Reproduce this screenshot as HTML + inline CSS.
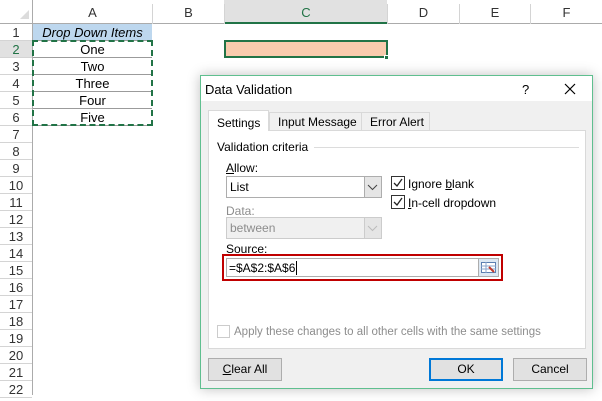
<!DOCTYPE html>
<html><head><style>
*{margin:0;padding:0;box-sizing:border-box}
body{width:602px;height:401px;overflow:hidden;background:#fff;font-family:"Liberation Sans",sans-serif;position:relative}
.a{position:absolute}
.hd{color:#333;font-size:13px;text-align:center}
.rn{left:0;width:32px;text-align:center;font-size:13px;color:#333;height:17px;line-height:17px;border-bottom:1px solid #d4d4d4}
.cl{left:33px;width:119px;text-align:center;font-size:13px;height:17px;line-height:17px;border-bottom:1px solid #9b9b9b;color:#000}
.t{font-size:12px;color:#000;white-space:nowrap}
.cb{width:14px;height:14px;border:1px solid #333;background:#fff}
.btn{height:23px;border:1px solid #adadad;background:#e1e1e1;font-size:12px;text-align:center;line-height:21px}
</style></head><body>
<div class="a" style="left:0;top:0;width:602px;height:24px;border-bottom:1px solid #ababab;background:#fff"></div>
<div class="a" style="left:224px;top:0;width:163px;height:24px;background:#e1e1e1;border-bottom:2px solid #217346"></div>
<div class="a" style="left:32px;top:0;width:1px;height:395px;background:#ababab"></div>
<div class="a" style="left:152px;top:4px;width:1px;height:20px;background:#d4d4d4"></div>
<div class="a" style="left:224px;top:4px;width:1px;height:20px;background:#d4d4d4"></div>
<div class="a" style="left:387px;top:4px;width:1px;height:20px;background:#d4d4d4"></div>
<div class="a" style="left:459px;top:4px;width:1px;height:20px;background:#d4d4d4"></div>
<div class="a" style="left:530px;top:4px;width:1px;height:20px;background:#d4d4d4"></div>
<div class="a" style="left:20px;top:10px;width:0;height:0;border-left:9px solid transparent;border-bottom:9px solid #dcdcdc"></div>
<div class="a hd" style="left:33px;top:5px;width:119px">A</div>
<div class="a hd" style="left:153px;top:5px;width:71px">B</div>
<div class="a hd" style="left:225px;top:5px;width:162px;color:#217346">C</div>
<div class="a hd" style="left:388px;top:5px;width:71px">D</div>
<div class="a hd" style="left:460px;top:5px;width:70px">E</div>
<div class="a hd" style="left:531px;top:5px;width:71px">F</div>
<div id="rows"></div>
<script>
var h='';for(var i=1;i<=22;i++){var y=24+(i-1)*17;h+='<div class="a rn" style="top:'+y+'px;'+(i==2?'background:#e1e1e1;color:#217346':'')+'">'+i+'</div>';}
document.getElementById('rows').outerHTML=h;
</script>
<div class="a cl" style="top:24px;background:#bdd7ee;font-style:italic">Drop Down Items</div>
<div class="a cl" style="top:41px">One</div>
<div class="a cl" style="top:58px">Two</div>
<div class="a cl" style="top:75px">Three</div>
<div class="a cl" style="top:92px">Four</div>
<div class="a cl" style="top:109px">Five</div>
<div class="a" style="left:32px;top:40px;width:121px;height:86px;border:2px dashed #217346"></div>
<div class="a" style="left:224px;top:40px;width:164px;height:18px;background:#f8cbad;border:2px solid #217346"></div>
<div class="a" style="left:384px;top:55px;width:5px;height:5px;background:#217346;border:1px solid #fff"></div>
<div class="a" style="left:200px;top:75px;width:393px;height:314px;background:#f0f0f0;border:1px solid #5fbf8f;box-shadow:0 0 12px rgba(0,0,0,0.25)">
 <div class="a" style="left:0;top:0;width:391px;height:25px;background:#fff"></div>
 <div class="a" style="left:4px;top:6px;font-size:13px;color:#000">Data Validation</div>
 <div class="a" style="left:321px;top:6px;font-size:13px">?</div>
 <svg class="a" style="left:363px;top:7px" width="12" height="12"><path d="M1 1L11 11M11 1L1 11" stroke="#000" stroke-width="1.2"/></svg>
 <div class="a" style="left:7px;top:54px;width:378px;height:219px;background:#fff;border:1px solid #d9d9d9"></div>
 <div class="a t" style="left:7px;top:34px;width:61px;height:21px;background:#fff;border:1px solid #d9d9d9;border-bottom:none;padding:5px 0 0 8px">Settings</div>
 <div class="a t" style="left:68px;top:36px;width:93px;height:19px;border:1px solid #d9d9d9;padding:2px 0 0 8px">Input Message</div>
 <div class="a t" style="left:160px;top:36px;width:69px;height:19px;border:1px solid #d9d9d9;padding:2px 0 0 8px">Error Alert</div>
 <div class="a t" style="left:16px;top:64px">Validation criteria</div>
 <div class="a" style="left:113px;top:71px;width:265px;height:1px;background:#dcdcdc"></div>
 <div class="a t" style="left:25px;top:85px"><u>A</u>llow:</div>
 <div class="a" style="left:25px;top:100px;width:156px;height:22px;border:1px solid #adadad;background:#fff"></div>
 <div class="a t" style="left:29px;top:104px">List</div>
 <div class="a" style="left:163px;top:101px;width:17px;height:20px;background:#e5e5e5;border-left:1px solid #adadad"></div>
 <svg class="a" style="left:166px;top:108px" width="11" height="7"><path d="M1 1L5.5 5.5L10 1" stroke="#444" fill="none"/></svg>
 <div class="a t" style="left:25px;top:128px;color:#8d8d8d">Data:</div>
 <div class="a" style="left:25px;top:141px;width:156px;height:22px;border:1px solid #ccc;background:#f0f0f0"></div>
 <div class="a t" style="left:29px;top:145px;color:#8d8d8d">between</div>
 <div class="a" style="left:163px;top:142px;width:17px;height:20px;background:#e5e5e5;border-left:1px solid #ccc"></div>
 <svg class="a" style="left:166px;top:149px" width="11" height="7"><path d="M1 1L5.5 5.5L10 1" stroke="#bbb" fill="none"/></svg>
 <div class="a cb" style="left:190px;top:100px"></div>
 <svg class="a" style="left:191px;top:101px" width="12" height="12"><path d="M2 6L5 9L10 2" stroke="#222" fill="none" stroke-width="1.3"/></svg>
 <div class="a t" style="left:207px;top:101px">Ignore <u>b</u>lank</div>
 <div class="a cb" style="left:190px;top:119px"></div>
 <svg class="a" style="left:191px;top:120px" width="12" height="12"><path d="M2 6L5 9L10 2" stroke="#222" fill="none" stroke-width="1.3"/></svg>
 <div class="a t" style="left:207px;top:120px"><u>I</u>n-cell dropdown</div>
 <div class="a t" style="left:25px;top:166px">Source:</div>
 <div class="a" style="left:21px;top:178px;width:281px;height:27px;border:2px solid #c00000"></div>
 <div class="a" style="left:25px;top:182px;width:273px;height:19px;border:1px solid #adadad;background:#fff"></div>
 <div class="a t" style="left:28px;top:185px">=$A$2:$A$6<span style="border-left:1px solid #000;margin-left:1px"></span></div>
 <div class="a" style="left:277px;top:183px;width:20px;height:17px;background:#dde8f3;border-left:1px solid #adadad"></div>
 <svg class="a" style="left:280px;top:186px" width="15" height="11"><rect x="0.5" y="0.5" width="14" height="10" fill="#fff" stroke="#5b7fb0"/><path d="M0 4H15M0 7H15M5 0V11" stroke="#8aa6cc"/><path d="M8 5L13 10" stroke="#c0392b" stroke-width="2"/></svg>
 <div class="a" style="left:16px;top:249px;width:13px;height:13px;border:1px solid #ccc;background:#fff"></div>
 <div class="a t" style="left:33px;top:250px;color:#8d8d8d;font-size:11.5px">Apply these changes to all other cells with the same settings</div>
 <div class="a btn" style="left:7px;top:282px;width:74px"><u>C</u>lear All</div>
 <div class="a btn" style="left:228px;top:282px;width:74px;border:2px solid #0078d7;line-height:19px">OK</div>
 <div class="a btn" style="left:312px;top:282px;width:74px">Cancel</div>
</div>
</body></html>
